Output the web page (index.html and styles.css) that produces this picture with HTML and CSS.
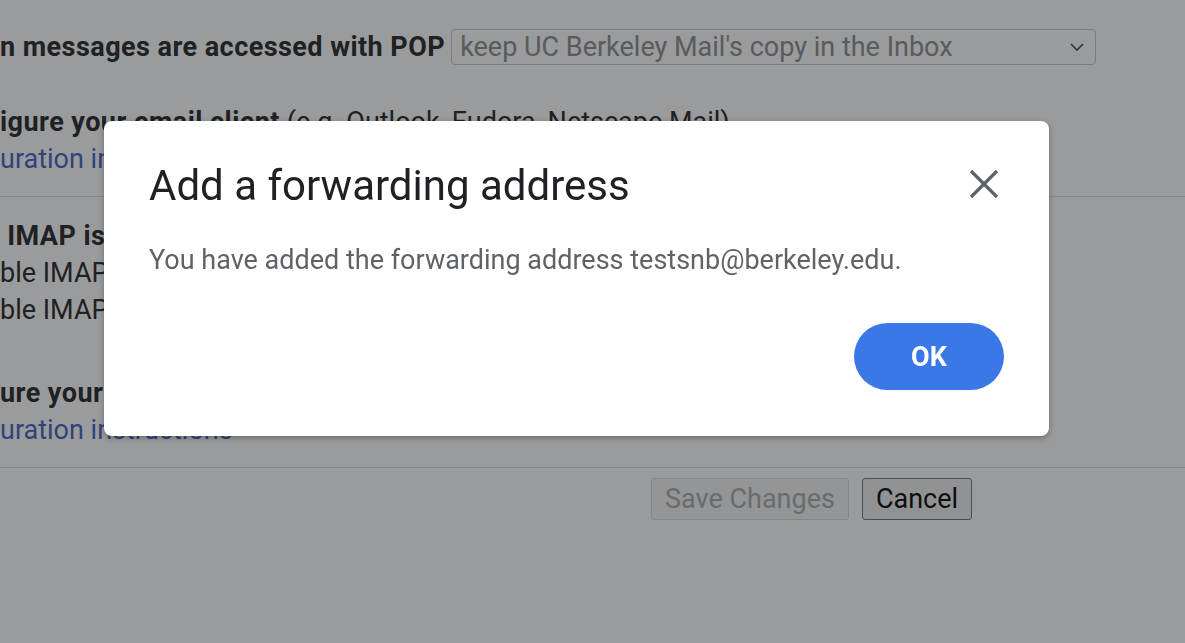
FILE: index.html
```html
<!DOCTYPE html>
<html>
<head>
<meta charset="utf-8">
<link rel="stylesheet" href="styles.css">
</head>
<body>
<div class="page">
  <div class="row first">
    <span class="b">n messages are accessed with POP</span>
    <div class="select">
      <span>keep UC Berkeley Mail's copy in the Inbox</span>
      <svg class="chev" width="16" height="10" viewBox="0 0 16 10"><path d="M2 2 L8 8 L14 2" fill="none" stroke="#444" stroke-width="1.6"/></svg>
    </div>
  </div>
  <div class="row r2"><span class="b">igure your email client</span> (e.g. Outlook, Eudora, Netscape Mail)</div>
  <div class="row r3"><a class="link">uration instructions</a></div>
  <hr class="div">
  <div class="row r4"><span class="b">&nbsp;IMAP is disabled</span></div>
  <div class="row r5">ble IMAP</div>
  <div class="row r6">ble IMAP</div>
  <div class="row r7"><span class="b">ure your email client</span> (e.g. Outlook, Thunderbird, iPhone)</div>
  <div class="row r8"><a class="link">uration instructions</a></div>
  <hr class="div div2">
  <div class="actions">
    <button class="btn disabled">Save Changes</button>
    <button class="btn">Cancel</button>
  </div>
</div>
<div class="backdrop"></div>
<div class="dialog">
  <div class="dhead">
    <h1 class="title">Add a forwarding address</h1>
    <svg class="close" width="30" height="30" viewBox="0 0 30 30"><path d="M2 2 L28 28 M28 2 L2 28" stroke="#5f6368" stroke-width="3.2" fill="none"/></svg>
  </div>
  <p class="msg">You have added the forwarding address testsnb@berkeley.edu.</p>
  <div class="dfoot"><button class="ok">OK</button></div>
</div>
</body>
</html>
```
FILE: styles.css
```css
html, body { margin: 0; padding: 0; }
body {
  background: #ffffff;
  font-family: Roboto, "Liberation Sans", sans-serif;
  font-size: 27px;
  color: #222222;
  width: 1185px;
  height: 643px;
  overflow: hidden;
}
.page { padding-top: 28px; }
.row { line-height: 37px; white-space: nowrap; }
.b { font-weight: 700; color: #202124; letter-spacing: 0.45px; }
.first { display: flex; align-items: center; gap: 6px; height: 38px; }
.select {
  width: 625px; height: 34px; border: 1px solid #c6c6c6; border-radius: 4px;
  display: flex; align-items: center; justify-content: space-between;
  padding: 0 10px 0 8px; box-sizing: content-box; color: #8a8a8a;
}
.r2 { margin-top: 38px; }
.link { color: #4360c4; }
.div { border: 0; border-top: 1px solid #dcdcdc; margin: 18px 0 0; }
.r4 { margin-top: 21px; }
.r7 { margin-top: 46px; }
.div2 { margin-top: 18px; }
.actions { display: flex; gap: 13px; padding-left: 651px; margin-top: 10px; }
.btn {
  font-family: Roboto, "Liberation Sans", sans-serif; font-size: 27px;
  height: 42px; padding: 0 13px; background: #efefef; border: 1px solid #767676;
  border-radius: 3px; color: #000;
}
.btn.disabled { color: #a8a8a8; border-color: #d8d8d8; background: #f4f4f4; padding: 0 13px; }
.backdrop { position: fixed; inset: 0; background: rgba(32,33,36,0.45); }
.dialog {
  position: fixed; left: 104px; top: 121px; width: 945px; height: 315px;
  box-sizing: border-box; background: #fff; border-radius: 8px;
  box-shadow: 0 2px 6px rgba(0,0,0,0.3);
  padding: 38px 45px 46px 45px;
  display: flex; flex-direction: column;
}
.dhead { display: flex; justify-content: space-between; align-items: center; }
.title {
  margin: 0; font-family: Roboto, "Liberation Sans", sans-serif; font-weight: 400;
  font-size: 42px; line-height: 54px; color: #202124;
}
.close { margin-right: 5px; margin-top: -4px; }
.msg { margin: 29px 0 0; font-size: 27px; line-height: 36px; color: #5f6368; }
.dfoot { margin-top: auto; display: flex; justify-content: flex-end; }
.ok {
  width: 150px; height: 67px; border-radius: 34px; border: 0; background: #3b78e7;
  color: #fff; font-family: Roboto, "Liberation Sans", sans-serif; font-size: 27px; font-weight: 700;
}
```
